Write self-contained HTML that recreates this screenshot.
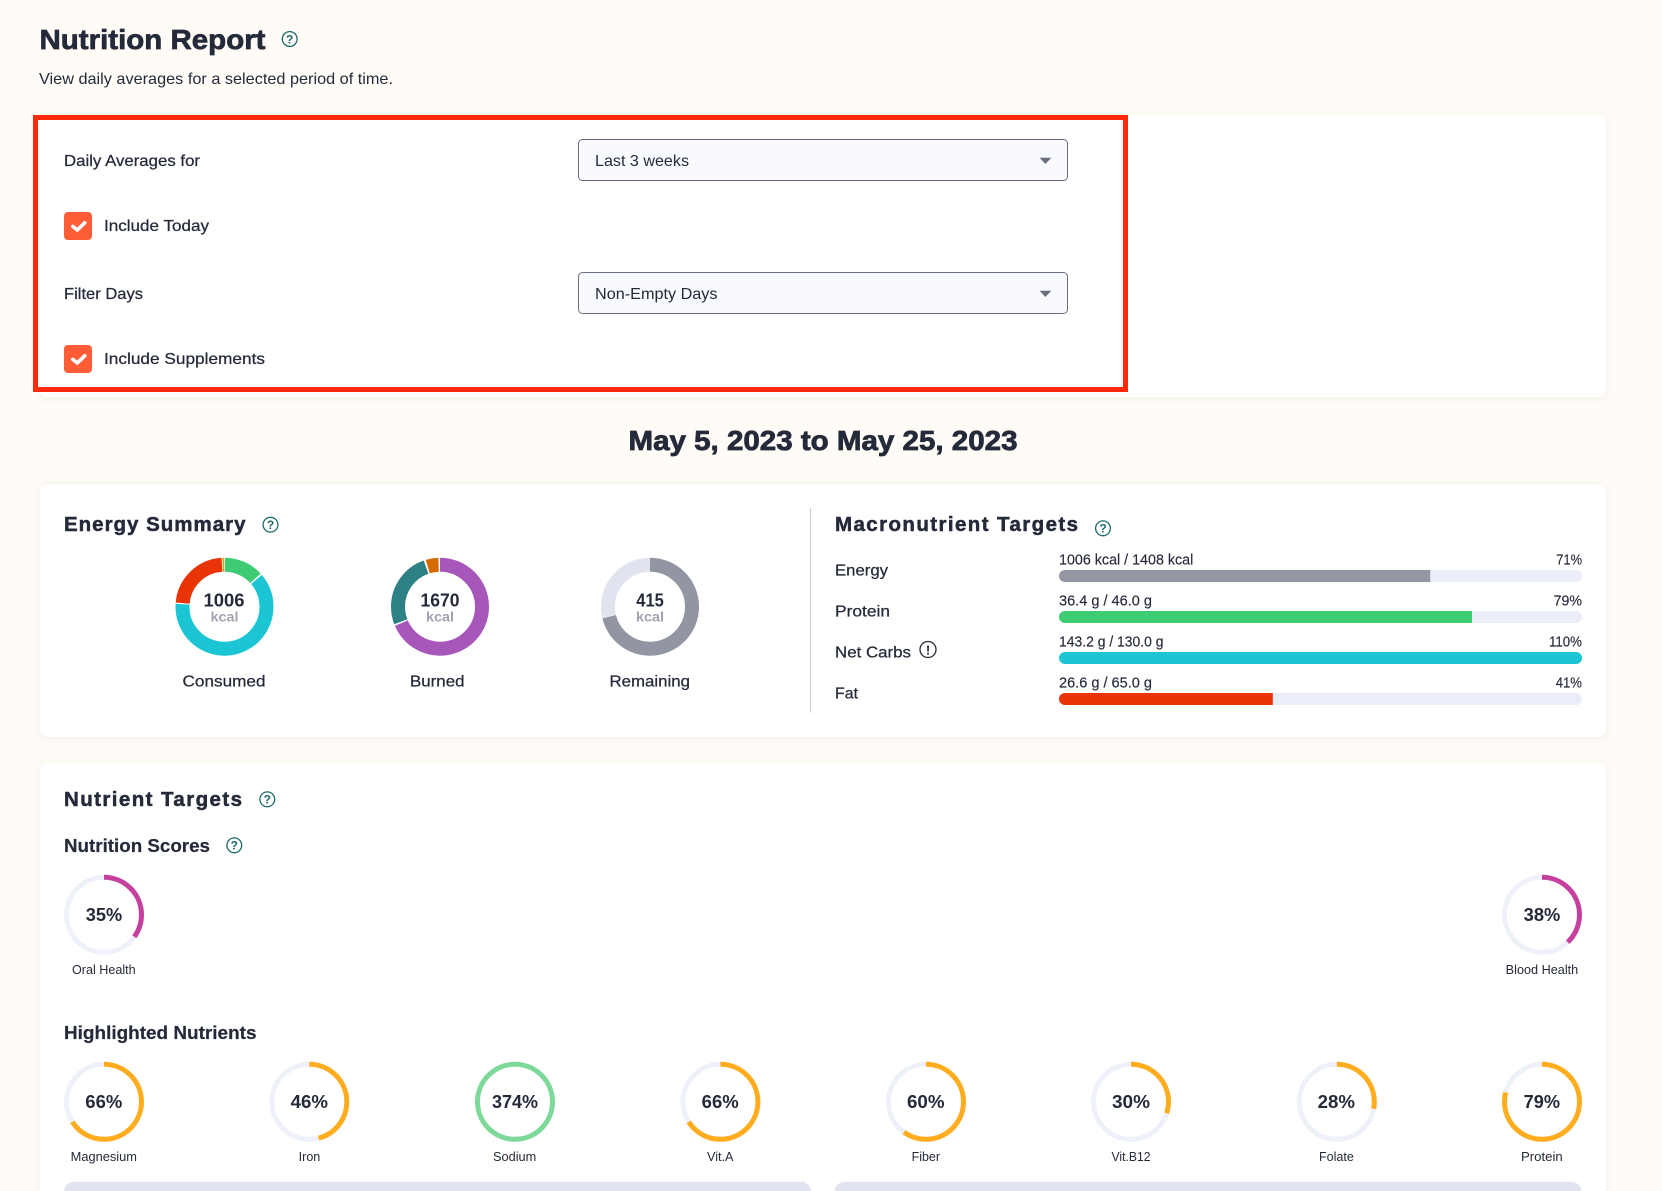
<!DOCTYPE html>
<html lang="en"><head><meta charset="utf-8"><title>Nutrition Report</title>
<style>
html,body{margin:0;padding:0;background:#fffcf7;width:1662px;height:1191px;overflow:hidden}
svg{display:block}
text{font-family:"Liberation Sans",sans-serif;fill:#252a3a}
.t{font-size:28px;font-weight:700;stroke:#252a3a;stroke-width:.7px}
.sub{font-size:16px}
.l{font-size:16px;stroke:#252a3a;stroke-width:.25px}
.h{font-size:20.5px;font-weight:700;stroke:#252a3a;stroke-width:.5px}
.h2{font-size:18.5px;font-weight:700;stroke:#252a3a;stroke-width:.2px}
.s{font-size:14.5px;stroke:#252a3a;stroke-width:.15px}
.n{font-size:18px;font-weight:700;text-anchor:start}
.k{font-size:14px;font-weight:700;fill:#a0a3b1}
.p{font-size:18px;font-weight:700}
.c{font-size:12.5px}
.q{font-size:12px;font-weight:700;fill:#1d6b6b;text-anchor:middle}
.ic{fill:none;stroke:#1d6b6b;stroke-width:1.3}
.card{fill:#fff;filter:drop-shadow(0 1px 5px rgba(60,50,30,.07))}
.rt{fill:none;stroke:#eff1fa;stroke-width:5}
.ra{fill:none;stroke-width:5}
.d{fill:none;stroke-width:14}
</style></head>
<body>
<svg width="1662" height="1191" viewBox="0 0 1662 1191" xmlns="http://www.w3.org/2000/svg">
<rect width="1662" height="1191" fill="#fffcf7"/>

<text class="t" x="39.5" y="49" textLength="226" lengthAdjust="spacingAndGlyphs">Nutrition Report</text>
<circle class="ic" cx="289.7" cy="39" r="7.4"/><text class="q" x="289.7" y="43.3">?</text>
<text class="sub" x="39" y="84" textLength="354" lengthAdjust="spacingAndGlyphs">View daily averages for a selected period of time.</text>

<rect class="card" x="39.5" y="115" width="1566.5" height="282" rx="8"/>
<rect x="35.5" y="117.5" width="1090" height="272" fill="none" stroke="#fb2a0b" stroke-width="5"/>

<text class="l" x="64" y="166" textLength="136" lengthAdjust="spacingAndGlyphs">Daily Averages for</text>
<rect x="578.5" y="139.5" width="489" height="41" rx="4" fill="#f9faff" stroke="#6b6e80"/>
<text class="sub" x="595" y="166" textLength="94" lengthAdjust="spacingAndGlyphs">Last 3 weeks</text>
<path d="M1039.5 157.8H1051.3L1045.4 164Z" fill="#6b6e7c"/>

<rect x="64" y="212" width="28" height="28" rx="4" fill="#ff5d36"/>
<path d="M72.8 226.4L77.3 230L84.7 222.8" fill="none" stroke="#fff" stroke-width="3.6" stroke-linecap="round" stroke-linejoin="round"/>
<text class="l" x="104" y="231" textLength="105" lengthAdjust="spacingAndGlyphs">Include Today</text>

<text class="l" x="64" y="299" textLength="79" lengthAdjust="spacingAndGlyphs">Filter Days</text>
<rect x="578.5" y="272.5" width="489" height="41" rx="4" fill="#f9faff" stroke="#6b6e80"/>
<text class="sub" x="595" y="299" textLength="122.5" lengthAdjust="spacingAndGlyphs">Non-Empty Days</text>
<path d="M1039.5 290.8H1051.3L1045.4 297Z" fill="#6b6e7c"/>

<rect x="64" y="345" width="28" height="28" rx="4" fill="#ff5d36"/>
<path d="M72.8 359.4L77.3 363L84.7 355.8" fill="none" stroke="#fff" stroke-width="3.6" stroke-linecap="round" stroke-linejoin="round"/>
<text class="l" x="104" y="364" textLength="161" lengthAdjust="spacingAndGlyphs">Include Supplements</text>

<text class="t" x="628.5" y="450" textLength="389" lengthAdjust="spacingAndGlyphs" style="stroke-width:.8px">May 5, 2023 to May 25, 2023</text>

<rect class="card" x="39.5" y="484.5" width="1566.5" height="252.5" rx="8"/>

<text class="h" x="64" y="531" textLength="181.5" lengthAdjust="spacing">Energy Summary</text>
<circle class="ic" cx="270.5" cy="524.7" r="7.4"/><text class="q" x="270.5" y="529">?</text>

<g transform="rotate(-90 224.5 606.7)">
<circle class="d" cx="224.5" cy="606.7" r="42" pathLength="360" stroke="#3ecb74" stroke-dasharray="47 360" stroke-dashoffset="-0.5"/>
<circle class="d" cx="224.5" cy="606.7" r="42" pathLength="360" stroke="#1cc5d3" stroke-dasharray="224 360" stroke-dashoffset="-49.5"/>
<circle class="d" cx="224.5" cy="606.7" r="42" pathLength="360" stroke="#e83407" stroke-dasharray="81.5 360" stroke-dashoffset="-275"/>
<circle class="d" cx="224.5" cy="606.7" r="42" pathLength="360" stroke="#f09a10" stroke-dasharray="2 360" stroke-dashoffset="-357.5"/>
</g>
<text class="n" x="203.5" y="606.6" textLength="41" lengthAdjust="spacingAndGlyphs">1006</text>
<text class="k" x="210.5" y="621.6" textLength="28" lengthAdjust="spacingAndGlyphs">kcal</text>
<text class="l" x="182.5" y="686.6" textLength="83" lengthAdjust="spacingAndGlyphs">Consumed</text>

<g transform="rotate(-90 440 606.7)">
<circle class="d" cx="440" cy="606.7" r="42" pathLength="360" stroke="#a657b9" stroke-dasharray="247 360"/>
<circle class="d" cx="440" cy="606.7" r="42" pathLength="360" stroke="#2d8083" stroke-dasharray="91.5 360" stroke-dashoffset="-249"/>
<circle class="d" cx="440" cy="606.7" r="42" pathLength="360" stroke="#d46a00" stroke-dasharray="15 360" stroke-dashoffset="-343"/>
</g>
<text class="n" x="420.5" y="606.6" textLength="39" lengthAdjust="spacingAndGlyphs">1670</text>
<text class="k" x="426" y="621.6" textLength="28" lengthAdjust="spacingAndGlyphs">kcal</text>
<text class="l" x="410" y="686.6" textLength="54.5" lengthAdjust="spacingAndGlyphs">Burned</text>

<g transform="rotate(-90 650 606.7)">
<circle class="d" cx="650" cy="606.7" r="42" stroke="#e1e4ef"/>
<circle class="d" cx="650" cy="606.7" r="42" pathLength="360" stroke="#9296a3" stroke-dasharray="256 360"/>
</g>
<text class="n" x="636.3" y="606.6" textLength="27.5" lengthAdjust="spacingAndGlyphs">415</text>
<text class="k" x="636" y="621.6" textLength="28" lengthAdjust="spacingAndGlyphs">kcal</text>
<text class="l" x="609.5" y="686.6" textLength="80.5" lengthAdjust="spacingAndGlyphs">Remaining</text>

<rect x="810" y="508" width="1" height="204.7" fill="#c9ccd6"/>

<text class="h" x="835" y="531" textLength="243" lengthAdjust="spacing">Macronutrient Targets</text>
<circle class="ic" cx="1103" cy="528.3" r="7.4"/><text class="q" x="1103" y="532.6">?</text>

<text class="l" x="835" y="575.7" textLength="53" lengthAdjust="spacingAndGlyphs">Energy</text>
<text class="l" x="835" y="616.7" textLength="55" lengthAdjust="spacingAndGlyphs">Protein</text>
<text class="l" x="835" y="657.3" textLength="76" lengthAdjust="spacingAndGlyphs">Net Carbs</text>
<circle cx="928" cy="649.5" r="8" fill="none" stroke="#252a3a" stroke-width="1.3"/><text x="928" y="654.3" text-anchor="middle" style="font-size:13px;font-weight:700">!</text>
<text class="l" x="835" y="698.3" textLength="23" lengthAdjust="spacingAndGlyphs">Fat</text>

<text class="s" x="1059" y="564.7" textLength="134.3" lengthAdjust="spacingAndGlyphs">1006 kcal / 1408 kcal</text>
<text class="s" x="1556.3" y="564.7" textLength="25.7" lengthAdjust="spacingAndGlyphs">71%</text>
<rect x="1059" y="570" width="523" height="12" rx="6" fill="#ebeef8"/>
<path d="M1065 570H1430.2V582H1065A6 6 0 0 1 1065 570Z" fill="#9296a3"/>

<text class="s" x="1059" y="605.7" textLength="93" lengthAdjust="spacingAndGlyphs">36.4 g / 46.0 g</text>
<text class="s" x="1553.6" y="605.7" textLength="28.4" lengthAdjust="spacingAndGlyphs">79%</text>
<rect x="1059" y="611" width="523" height="12" rx="6" fill="#ebeef8"/>
<path d="M1065 611H1472V623H1065A6 6 0 0 1 1065 611Z" fill="#3ecb74"/>

<text class="s" x="1059" y="646.7" textLength="104.5" lengthAdjust="spacingAndGlyphs">143.2 g / 130.0 g</text>
<text class="s" x="1549" y="646.7" textLength="33" lengthAdjust="spacingAndGlyphs">110%</text>
<rect x="1059" y="652" width="523" height="12" rx="6" fill="#1cc5d3"/>

<text class="s" x="1059" y="687.7" textLength="93" lengthAdjust="spacingAndGlyphs">26.6 g / 65.0 g</text>
<text class="s" x="1555.7" y="687.7" textLength="26.3" lengthAdjust="spacingAndGlyphs">41%</text>
<rect x="1059" y="693" width="523" height="12" rx="6" fill="#ebeef8"/>
<path d="M1065 693H1272.8V705H1065A6 6 0 0 1 1065 693Z" fill="#e83407"/>

<rect class="card" x="39.5" y="763" width="1566.5" height="460" rx="8"/>

<text class="h" x="64" y="806" textLength="178" lengthAdjust="spacing">Nutrient Targets</text>
<circle class="ic" cx="267.3" cy="799.3" r="7.4"/><text class="q" x="267.3" y="803.6">?</text>

<text class="h2" x="64" y="852" textLength="146" lengthAdjust="spacingAndGlyphs">Nutrition Scores</text>
<circle class="ic" cx="234.3" cy="845.3" r="7.4"/><text class="q" x="234.3" y="849.6">?</text>

<circle class="rt" cx="104" cy="914.8" r="37.5"/>
<circle class="ra" cx="104" cy="914.8" r="37.5" pathLength="100" stroke="#c5409e" stroke-dasharray="35 100" transform="rotate(-90 104 914.8)"/>
<text class="p" x="85.8" y="921" textLength="36.4" lengthAdjust="spacingAndGlyphs">35%</text>
<text class="c" x="72" y="974" textLength="63.7" lengthAdjust="spacingAndGlyphs">Oral Health</text>

<circle class="rt" cx="1542" cy="914.8" r="37.5"/>
<circle class="ra" cx="1542" cy="914.8" r="37.5" pathLength="100" stroke="#c5409e" stroke-dasharray="38 100" transform="rotate(-90 1542 914.8)"/>
<text class="p" x="1523.7" y="921" textLength="36.6" lengthAdjust="spacingAndGlyphs">38%</text>
<text class="c" x="1505.7" y="974" textLength="72.5" lengthAdjust="spacingAndGlyphs">Blood Health</text>

<text class="h2" x="64" y="1039" textLength="192.5" lengthAdjust="spacingAndGlyphs">Highlighted Nutrients</text>

<circle class="rt" cx="104" cy="1101.8" r="37.5"/>
<circle class="ra" cx="104" cy="1101.8" r="37.5" pathLength="100" stroke="#ffad1f" stroke-dasharray="66 100" transform="rotate(-90 104 1101.8)"/>
<text class="p" x="85.3" y="1108" textLength="37" lengthAdjust="spacingAndGlyphs">66%</text>
<text class="c" x="70.7" y="1161" textLength="66.3" lengthAdjust="spacingAndGlyphs">Magnesium</text>

<circle class="rt" cx="309.3" cy="1101.8" r="37.5"/>
<circle class="ra" cx="309.3" cy="1101.8" r="37.5" pathLength="100" stroke="#ffad1f" stroke-dasharray="46 100" transform="rotate(-90 309.3 1101.8)"/>
<text class="p" x="290.7" y="1108" textLength="37.3" lengthAdjust="spacingAndGlyphs">46%</text>
<text class="c" x="298.7" y="1161" textLength="21.6" lengthAdjust="spacingAndGlyphs">Iron</text>

<circle class="ra" cx="515" cy="1101.8" r="37.5" stroke="#7dd99a"/>
<text class="p" x="492" y="1108" textLength="46" lengthAdjust="spacingAndGlyphs">374%</text>
<text class="c" x="493" y="1161" textLength="43.3" lengthAdjust="spacingAndGlyphs">Sodium</text>

<circle class="rt" cx="720.4" cy="1101.8" r="37.5"/>
<circle class="ra" cx="720.4" cy="1101.8" r="37.5" pathLength="100" stroke="#ffad1f" stroke-dasharray="66 100" transform="rotate(-90 720.4 1101.8)"/>
<text class="p" x="701.7" y="1108" textLength="37" lengthAdjust="spacingAndGlyphs">66%</text>
<text class="c" x="707" y="1161" textLength="26.5" lengthAdjust="spacingAndGlyphs">Vit.A</text>

<circle class="rt" cx="926" cy="1101.8" r="37.5"/>
<circle class="ra" cx="926" cy="1101.8" r="37.5" pathLength="100" stroke="#ffad1f" stroke-dasharray="60 100" transform="rotate(-90 926 1101.8)"/>
<text class="p" x="907" y="1108" textLength="37.5" lengthAdjust="spacingAndGlyphs">60%</text>
<text class="c" x="911.6" y="1161" textLength="28.4" lengthAdjust="spacingAndGlyphs">Fiber</text>

<circle class="rt" cx="1131" cy="1101.8" r="37.5"/>
<circle class="ra" cx="1131" cy="1101.8" r="37.5" pathLength="100" stroke="#ffad1f" stroke-dasharray="30 100" transform="rotate(-90 1131 1101.8)"/>
<text class="p" x="1112" y="1108" textLength="38" lengthAdjust="spacingAndGlyphs">30%</text>
<text class="c" x="1111.5" y="1161" textLength="39" lengthAdjust="spacingAndGlyphs">Vit.B12</text>

<circle class="rt" cx="1336.8" cy="1101.8" r="37.5"/>
<circle class="ra" cx="1336.8" cy="1101.8" r="37.5" pathLength="100" stroke="#ffad1f" stroke-dasharray="28 100" transform="rotate(-90 1336.8 1101.8)"/>
<text class="p" x="1317.6" y="1108" textLength="37.3" lengthAdjust="spacingAndGlyphs">28%</text>
<text class="c" x="1319" y="1161" textLength="34.8" lengthAdjust="spacingAndGlyphs">Folate</text>

<circle class="rt" cx="1542" cy="1101.8" r="37.5"/>
<circle class="ra" cx="1542" cy="1101.8" r="37.5" pathLength="100" stroke="#ffad1f" stroke-dasharray="79 100" transform="rotate(-90 1542 1101.8)"/>
<text class="p" x="1523.7" y="1108" textLength="36.3" lengthAdjust="spacingAndGlyphs">79%</text>
<text class="c" x="1521" y="1161" textLength="41.7" lengthAdjust="spacingAndGlyphs">Protein</text>

<rect x="64" y="1181.7" width="747" height="40" rx="10" fill="#e1e4ee"/>
<rect x="834.5" y="1181.7" width="747" height="40" rx="10" fill="#e1e4ee"/>
</svg>
</body></html>
